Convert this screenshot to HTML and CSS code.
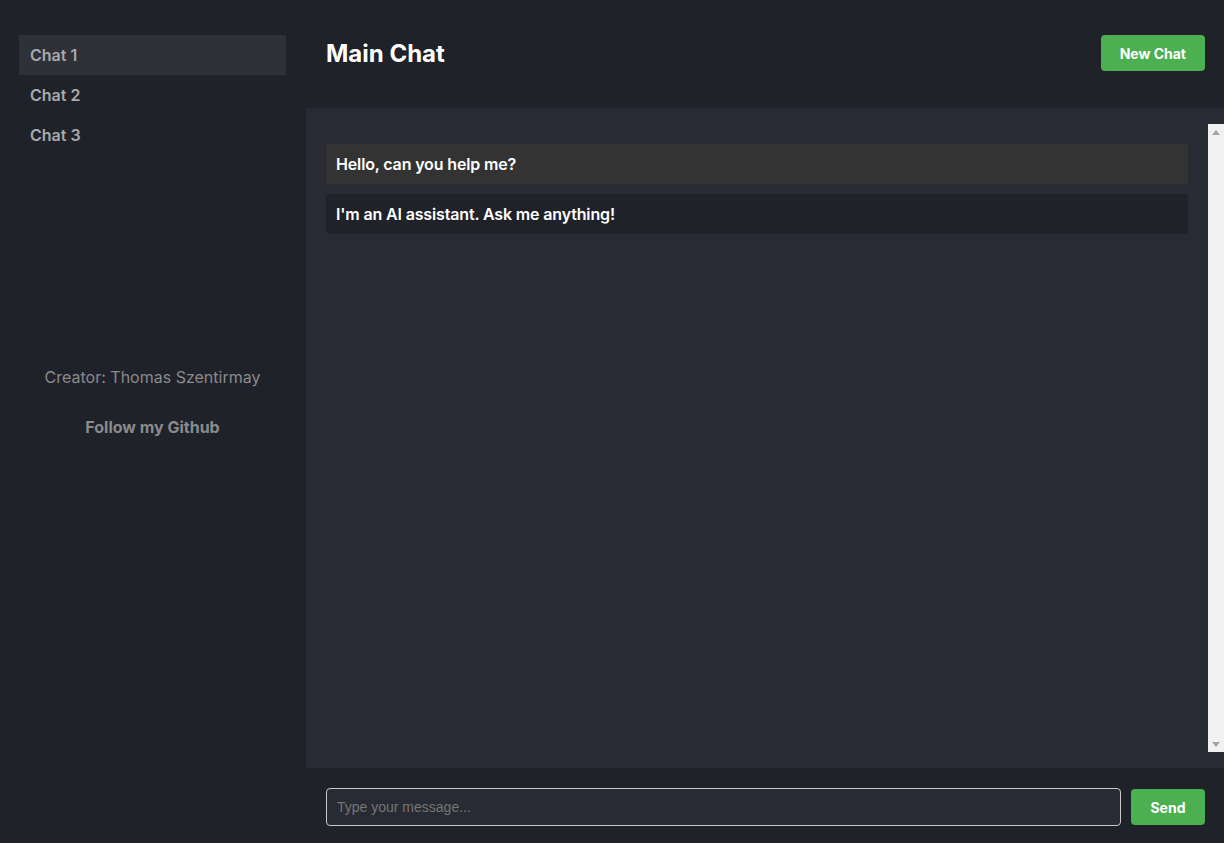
FILE: index.html
```html
<!DOCTYPE html>
<html lang="en">
<head>
<meta charset="utf-8">
<title>Main Chat</title>
<link rel="stylesheet" href="styles.css">
</head>
<body>
<div class="app">
  <aside class="sidebar">
    <ul class="chat-list">
      <li class="chat-item active">Chat 1</li>
      <li class="chat-item">Chat 2</li>
      <li class="chat-item">Chat 3</li>
    </ul>
    <div class="sidebar-footer">
      <p class="creator">Creator: Thomas Szentirmay</p>
      <a class="github" href="#">Follow my Github</a>
    </div>
  </aside>
  <main class="main">
    <header class="header">
      <h1 class="title">Main Chat</h1>
      <button class="btn">New Chat</button>
    </header>
    <section class="chat-area">
      <div class="messages">
        <div class="message user">Hello, can you help me?</div>
        <div class="message bot">I'm an AI assistant. Ask me anything!</div>
      </div>
      <div class="scrollbar" aria-hidden="true">
        <span class="sb-btn"><svg width="8" height="5" viewBox="0 0 8 5"><polygon points="0,5 8,5 4,0" fill="#a3a3a3"/></svg></span>
        <span class="sb-btn"><svg width="8" height="5" viewBox="0 0 8 5"><polygon points="0,0 8,0 4,5" fill="#a3a3a3"/></svg></span>
      </div>
    </section>
    <form class="composer">
      <input class="input" type="text" placeholder="Type your message...">
      <button class="btn send" type="button">Send</button>
    </form>
  </main>
</div>
</body>
</html>
```

FILE: styles.css
```css
* { box-sizing: border-box; }
html, body { margin: 0; height: 100%; }
body {
  background: #20222a;
  font-family: Inter, "Noto Sans", sans-serif;
  color: #fff;
  overflow: hidden;
}
.app { display: flex; height: 843px; }
.sidebar {
  width: 306px;
  flex: none;
  padding: 35px 20px 35px 19px;
  background: #20222a;
}
.chat-list { list-style: none; margin: 0; padding: 0; }
.chat-item {
  height: 40px;
  line-height: 40px;
  padding: 0 11px;
  font-size: 16px;
  font-weight: 600;
  color: #a9a9ab;
}
.chat-item.active { background: #2f3139; }
.sidebar-footer {
  margin-top: 212px;
  text-align: center;
  color: #8a8a8a;
  font-size: 16px;
}
.creator { margin: 0; line-height: 20px; }
.github {
  display: block;
  margin-top: 30px;
  line-height: 20px;
  color: #8a8a8a;
  font-weight: 700;
  text-decoration: none;
}
.main { flex: 1; display: flex; flex-direction: column; min-width: 0; }
.header {
  height: 108px;
  flex: none;
  display: flex;
  justify-content: space-between;
  align-items: flex-start;
  padding: 35px 19px 0 20px;
}
.title {
  margin: 0;
  font-size: 24px;
  line-height: 38px;
  font-weight: 700;
  color: #fff;
}
.btn {
  height: 36px;
  padding: 0 19px;
  border: none;
  border-radius: 4px;
  background: #4caf50;
  color: #fff;
  font-family: Inter, sans-serif;
  font-size: 14px;
  font-weight: 700;
}
.chat-area {
  flex: 1;
  min-height: 0;
  background: #282b33;
  padding: 16px 0 16px 20px;
  display: flex;
}
.messages {
  flex: 1;
  min-width: 0;
  padding: 20px 20px 0 0;
  display: flex;
  flex-direction: column;
  gap: 10px;
}
.scrollbar {
  flex: none;
  width: 16px;
  background: #f1f1f1;
  display: flex;
  flex-direction: column;
  justify-content: space-between;
}
.sb-btn {
  height: 16px;
  display: flex;
  align-items: center;
  justify-content: center;
}
.sb-btn svg { display: block; }
.message {
  height: 40px;
  line-height: 40px;
  padding: 0 10px;
  border-radius: 4px;
  font-size: 16px;
  font-weight: 600;
  letter-spacing: -0.15px;
  color: #fff;
  flex: none;
}
.message.user { background: #333333; }
.message.bot { background: #20222a; }
.composer {
  flex: none;
  height: 75px;
  display: flex;
  align-items: center;
  gap: 10px;
  padding: 3px 19px 0 20px;
}
.input {
  flex: 1;
  height: 38px;
  padding: 0 10px;
  border: 1px solid #c8c8c8;
  border-radius: 4px;
  background: #282b33;
  color: #fff;
  font-family: "Liberation Sans", Arial, sans-serif;
  font-size: 14px;
  outline: none;
}
.input::placeholder { color: #757575; }
.send { height: 36px; padding: 0 19.5px; }
```
